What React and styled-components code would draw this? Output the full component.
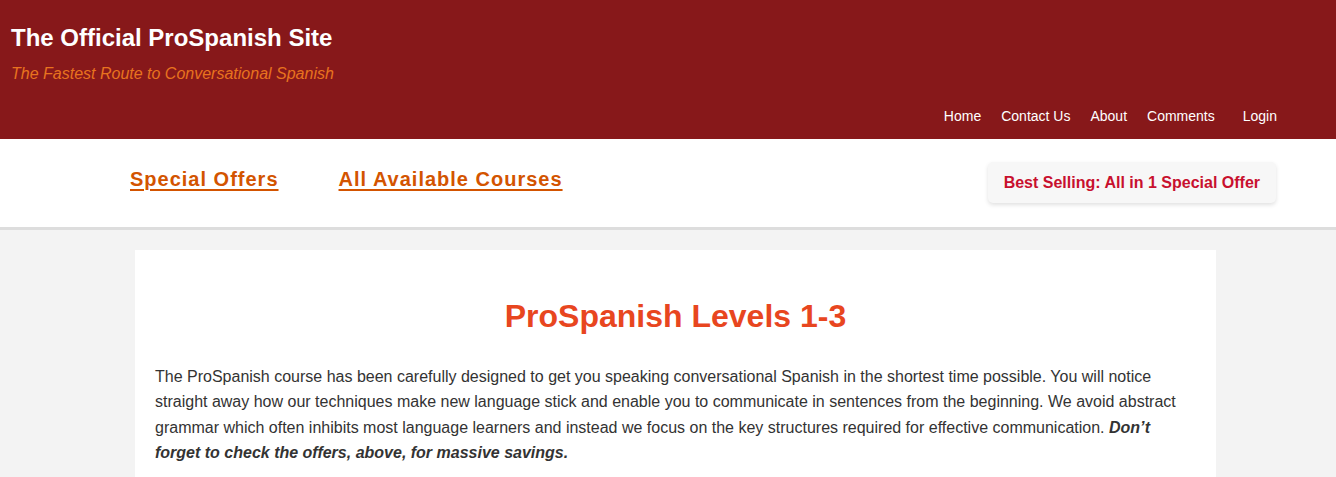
import React from "react";
import styled, { createGlobalStyle } from "styled-components";

const Global = createGlobalStyle`
  html, body { margin: 0; padding: 0; }
  body {
    background: #f3f3f3;
    font-family: "Liberation Sans", Arial, sans-serif;
  }
`;

const Header = styled.header`
  background: #87181a;
  height: 139px;
  box-sizing: border-box;
  padding: 23px 59px 0 11px;
  display: flex;
  flex-direction: column;
`;

const SiteTitle = styled.h1`
  margin: 0;
  color: #fff;
  font-size: 24px;
  font-weight: bold;
  line-height: 30px;
`;

const Tagline = styled.p`
  margin: 11px 0 0;
  color: #e8731f;
  font-size: 16px;
  font-style: italic;
  line-height: 20px;
`;

const Nav = styled.nav`
  margin-top: auto;
  margin-bottom: 14px;
  align-self: flex-end;
  display: flex;
  gap: 20px;
`;

const NavLink = styled.a`
  color: #fff;
  font-size: 14px;
  line-height: 18px;
  text-decoration: none;
  margin-left: ${(p) => (p.$wide ? "8px" : "0")};
`;

const SubBar = styled.div`
  background: #fff;
  height: 88px;
  border-bottom: 3px solid #dddddd;
  display: flex;
  align-items: flex-start;
  padding: 0 60px 0 130px;
`;

const OfferLinks = styled.div`
  display: flex;
  gap: 60px;
  padding-top: 28px;
`;

const OfferLink = styled.a`
  color: #d35400;
  font-size: 20px;
  font-weight: bold;
  letter-spacing: 1px;
  text-decoration: underline;
  text-underline-offset: 3px;
  line-height: 24px;
`;

const BestButton = styled.a`
  margin-left: auto;
  margin-top: 23px;
  background: #f7f7f7;
  color: #c8102e;
  font-size: 16px;
  font-weight: bold;
  line-height: 41px;
  height: 41px;
  padding: 0 16px;
  border-radius: 5px;
  box-shadow: 0 2px 4px rgba(0, 0, 0, 0.12);
  text-decoration: none;
`;

const Main = styled.main`
  padding: 20px 0 0 135px;
`;

const Card = styled.section`
  width: 1081px;
  background: #fff;
  box-sizing: border-box;
  padding: 46px 20px 20px;
`;

const Heading = styled.h2`
  margin: 0 0 28px;
  text-align: center;
  color: #e8461f;
  font-size: 32px;
  font-weight: bold;
  line-height: 40px;
`;

const Paragraph = styled.p`
  margin: 0;
  color: #333;
  font-size: 16px;
  line-height: 25.33px;
`;

const Emphasis = styled.strong`
  font-style: italic;
  font-weight: bold;
`;

export default function App() {
  return (
    <>
      <Global />
      <Header>
        <SiteTitle>The Official ProSpanish Site</SiteTitle>
        <Tagline>The Fastest Route to Conversational Spanish</Tagline>
        <Nav>
          <NavLink href="#">Home</NavLink>
          <NavLink href="#">Contact Us</NavLink>
          <NavLink href="#">About</NavLink>
          <NavLink href="#">Comments</NavLink>
          <NavLink href="#" $wide>Login</NavLink>
        </Nav>
      </Header>
      <SubBar>
        <OfferLinks>
          <OfferLink href="#">Special Offers</OfferLink>
          <OfferLink href="#">All Available Courses</OfferLink>
        </OfferLinks>
        <BestButton href="#">Best Selling: All in 1 Special Offer</BestButton>
      </SubBar>
      <Main>
        <Card>
          <Heading>ProSpanish Levels 1-3</Heading>
          <Paragraph>
            The ProSpanish course has been carefully designed to get you speaking conversational Spanish in the shortest time possible. You will notice straight away how our techniques make new language stick and enable you to communicate in sentences from the beginning. We avoid abstract grammar which often inhibits most language learners and instead we focus on the key structures required for effective communication.{" "}
            <Emphasis>Don’t forget to check the offers, above, for massive savings.</Emphasis>
          </Paragraph>
        </Card>
      </Main>
    </>
  );
}
